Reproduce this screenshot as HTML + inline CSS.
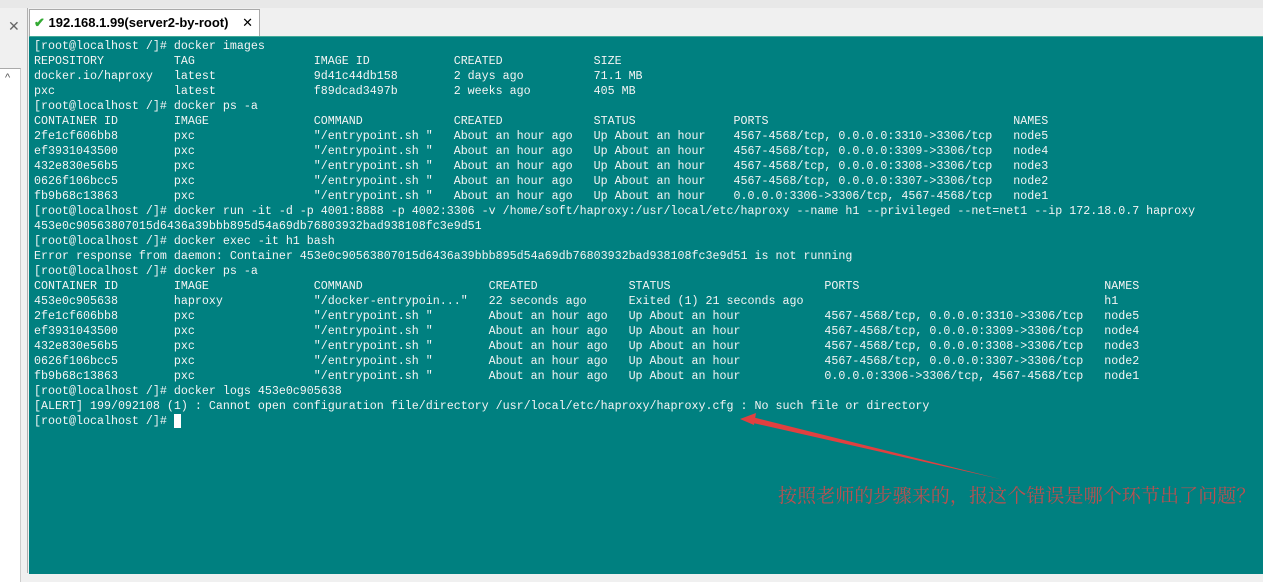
<!DOCTYPE html>
<html><head><meta charset="utf-8"><style>
body{margin:0;width:1263px;height:573px;overflow:hidden;background:#f0f0f0;position:relative;font-family:"Liberation Sans",sans-serif}
.top{position:absolute;left:0;top:0;width:1263px;height:8px;background:#e8e8e8}
.left{position:absolute;left:0;top:8px;width:27px;height:565px;background:#f0f0f0;border-right:1px solid #b0b0b0}
.lx{position:absolute;left:8px;top:10px;color:#666;font-size:14px}
.sb{position:absolute;left:0;top:60px;width:20px;height:513px;background:#fff;border-right:1px solid #ccc;border-top:1px solid #aaa}
.tabbar{position:absolute;left:28px;top:8px;width:1235px;height:29px;background:#f0f0f0}
.tab{position:absolute;left:29px;top:9px;width:229px;height:27px;background:#fff;border:1px solid #aaa;border-bottom:none;font-size:13px;font-weight:bold;line-height:26px}
.term{position:absolute;left:29px;top:36px;width:1234px;height:537px;background:#008080;border-top:1px solid #4a9}
pre{position:absolute;left:34px;top:39px;margin:0;font-family:"Liberation Mono",monospace;font-size:11.67px;line-height:15px;color:#f4f4f4}
.cn{position:absolute;left:778px;top:481px;font-family:"Liberation Serif","Noto Serif CJK SC",serif;font-size:19px;color:#b85050;white-space:nowrap;letter-spacing:0.1px}
</style></head><body>
<div class="top"></div>
<div class="left"><span class="lx">✕</span><div class="sb"><span style="position:absolute;left:5px;top:3px;font-size:11px;color:#555">^</span></div></div>
<div class="tabbar"></div>
<div class="tab"><span style="color:#3a3;margin-left:4px">✔</span> 192.168.1.99(server2-by-root) <span style="margin-left:10px;font-weight:normal">✕</span></div>
<div class="term"></div>
<pre>[root@localhost /]# docker images
REPOSITORY          TAG                 IMAGE ID            CREATED             SIZE
docker.io/haproxy   latest              9d41c44db158        2 days ago          71.1 MB
pxc                 latest              f89dcad3497b        2 weeks ago         405 MB
[root@localhost /]# docker ps -a
CONTAINER ID        IMAGE               COMMAND             CREATED             STATUS              PORTS                                   NAMES
2fe1cf606bb8        pxc                 "/entrypoint.sh "   About an hour ago   Up About an hour    4567-4568/tcp, 0.0.0.0:3310->3306/tcp   node5
ef3931043500        pxc                 "/entrypoint.sh "   About an hour ago   Up About an hour    4567-4568/tcp, 0.0.0.0:3309->3306/tcp   node4
432e830e56b5        pxc                 "/entrypoint.sh "   About an hour ago   Up About an hour    4567-4568/tcp, 0.0.0.0:3308->3306/tcp   node3
0626f106bcc5        pxc                 "/entrypoint.sh "   About an hour ago   Up About an hour    4567-4568/tcp, 0.0.0.0:3307->3306/tcp   node2
fb9b68c13863        pxc                 "/entrypoint.sh "   About an hour ago   Up About an hour    0.0.0.0:3306->3306/tcp, 4567-4568/tcp   node1
[root@localhost /]# docker run -it -d -p 4001:8888 -p 4002:3306 -v /home/soft/haproxy:/usr/local/etc/haproxy --name h1 --privileged --net=net1 --ip 172.18.0.7 haproxy
453e0c90563807015d6436a39bbb895d54a69db76803932bad938108fc3e9d51
[root@localhost /]# docker exec -it h1 bash
Error response from daemon: Container 453e0c90563807015d6436a39bbb895d54a69db76803932bad938108fc3e9d51 is not running
[root@localhost /]# docker ps -a
CONTAINER ID        IMAGE               COMMAND                  CREATED             STATUS                      PORTS                                   NAMES
453e0c905638        haproxy             "/docker-entrypoin..."   22 seconds ago      Exited (1) 21 seconds ago                                           h1
2fe1cf606bb8        pxc                 "/entrypoint.sh "        About an hour ago   Up About an hour            4567-4568/tcp, 0.0.0.0:3310->3306/tcp   node5
ef3931043500        pxc                 "/entrypoint.sh "        About an hour ago   Up About an hour            4567-4568/tcp, 0.0.0.0:3309->3306/tcp   node4
432e830e56b5        pxc                 "/entrypoint.sh "        About an hour ago   Up About an hour            4567-4568/tcp, 0.0.0.0:3308->3306/tcp   node3
0626f106bcc5        pxc                 "/entrypoint.sh "        About an hour ago   Up About an hour            4567-4568/tcp, 0.0.0.0:3307->3306/tcp   node2
fb9b68c13863        pxc                 "/entrypoint.sh "        About an hour ago   Up About an hour            0.0.0.0:3306->3306/tcp, 4567-4568/tcp   node1
[root@localhost /]# docker logs 453e0c905638
[ALERT] 199/092108 (1) : Cannot open configuration file/directory /usr/local/etc/haproxy/haproxy.cfg : No such file or directory
[root@localhost /]# <span style="background:#fff">&nbsp;</span></pre>
<svg style="position:absolute;left:0;top:0" width="1263" height="573">
<polygon points="1000,479 752,417 753,423" fill="#e04040"/>
<polygon points="740,419 756,413 754,425" fill="#e04040"/>
</svg>
<div class="cn">按照老师的步骤来的，报这个错误是哪个环节出了问题？</div>
</body></html>
